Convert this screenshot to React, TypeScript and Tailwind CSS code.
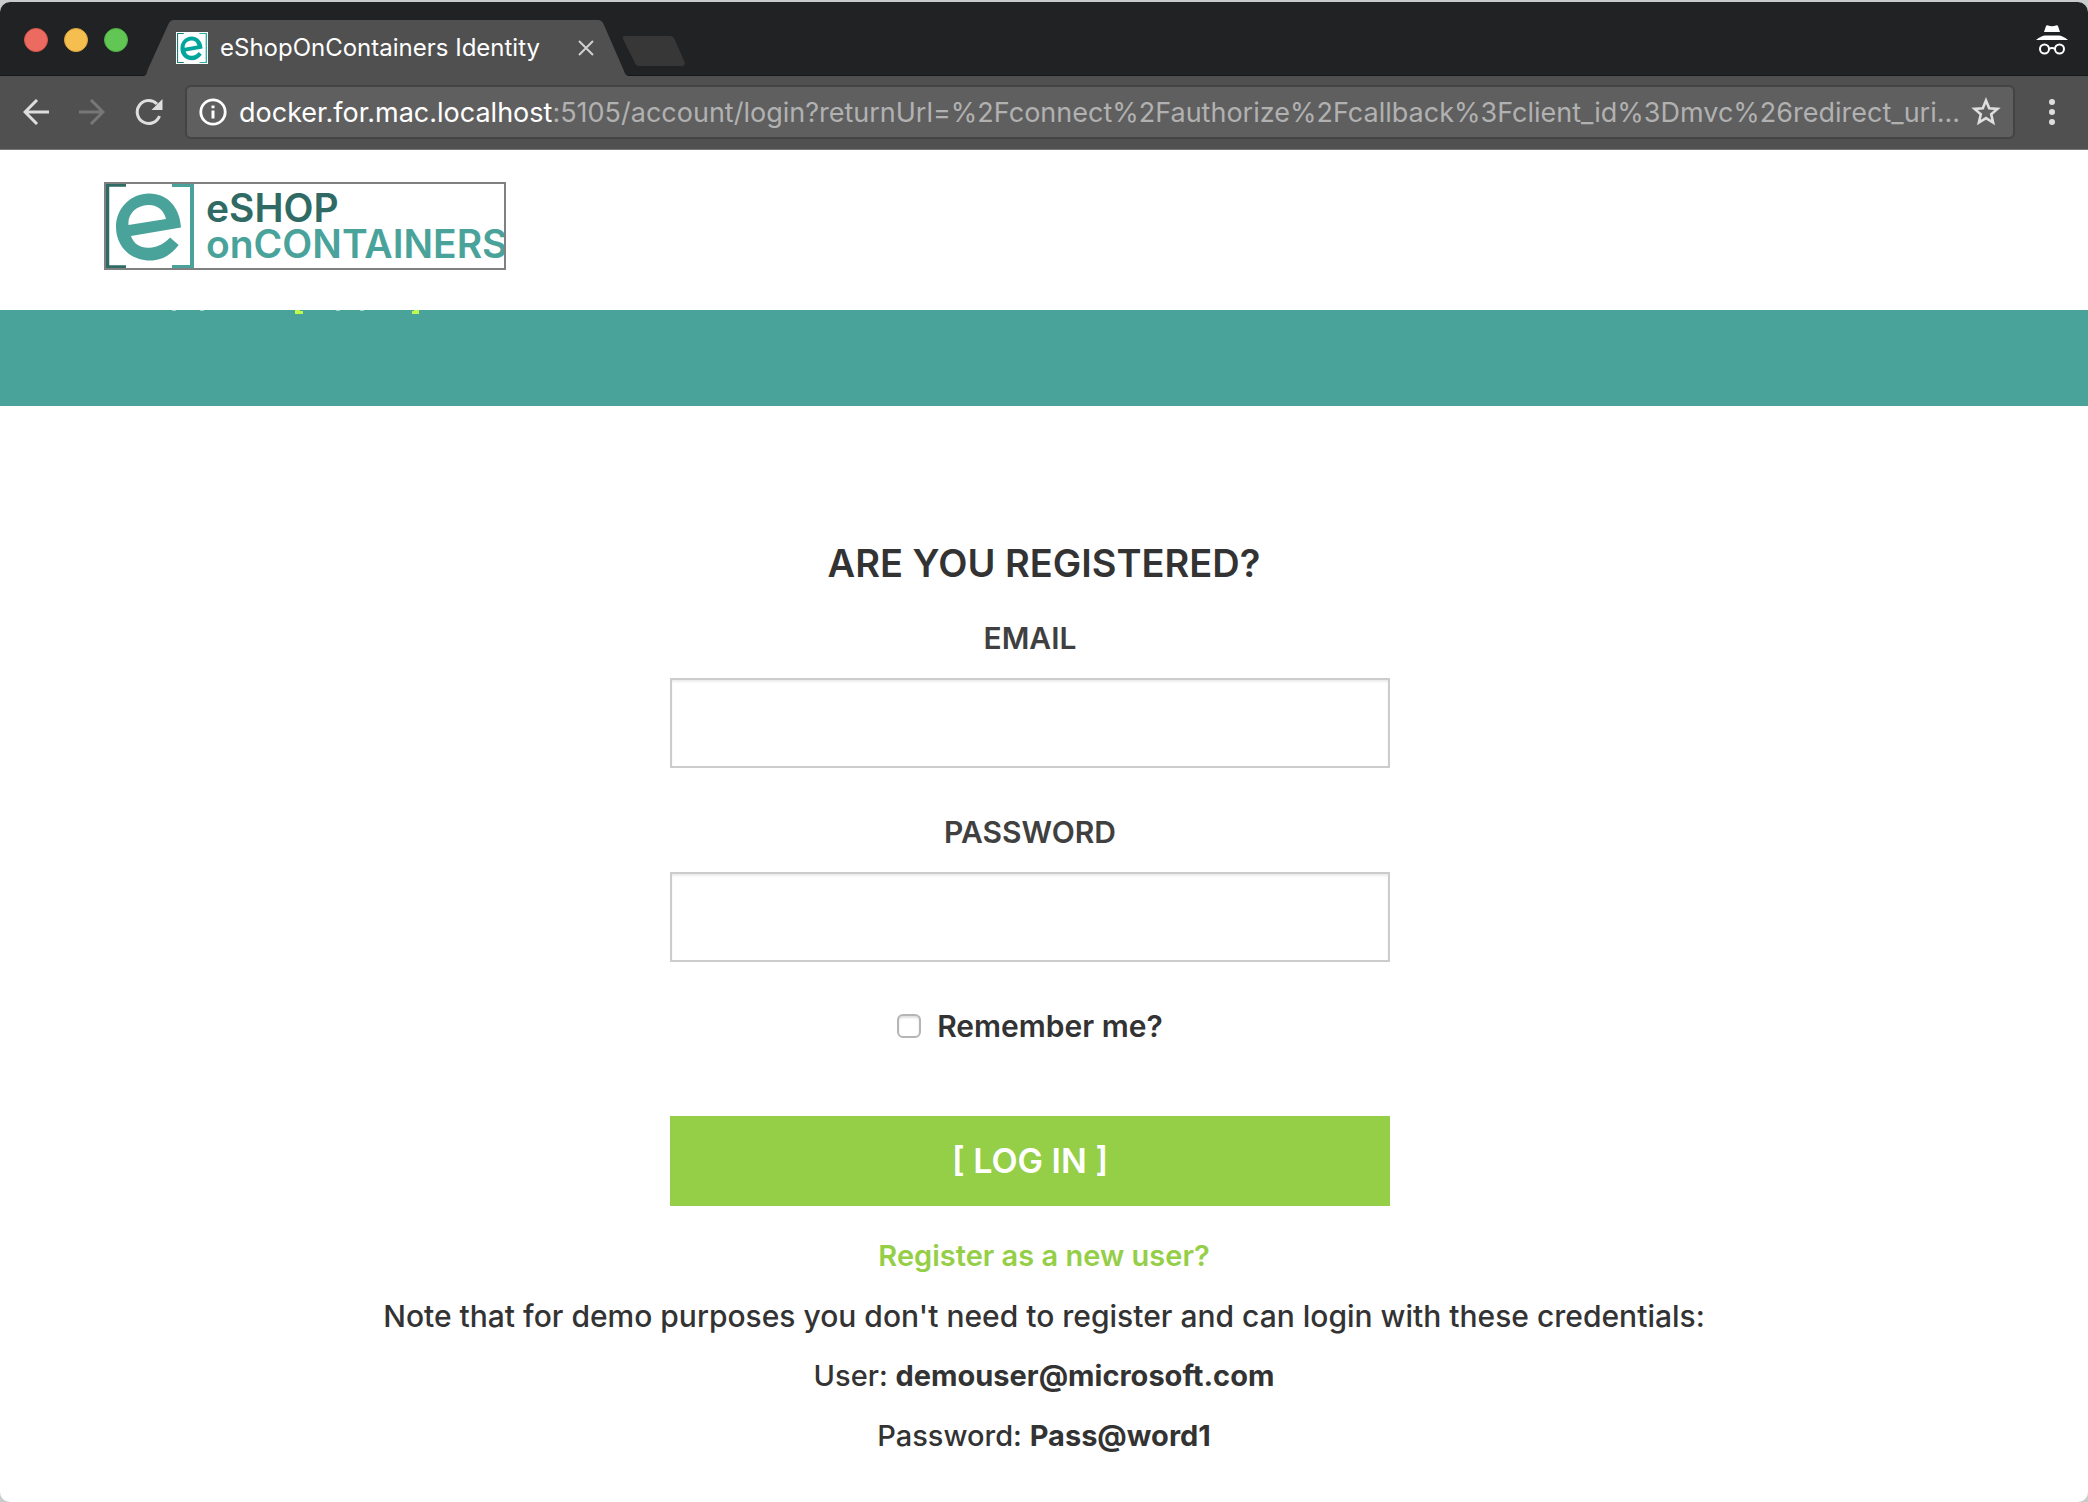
import React from "react";

const ui = "font-[Inter,sans-serif]";

function TrafficLights() {
  return (
    <div className="flex gap-4 pl-6 pt-[26px]">
      <button type="button" aria-label="Close window" className="size-6 rounded-full border border-[#d8574c] bg-[#ec6b60]" />
      <button type="button" aria-label="Minimise window" className="size-6 rounded-full border border-[#dda53c] bg-[#f5bf4f]" />
      <button type="button" aria-label="Zoom window" className="size-6 rounded-full border border-[#4fb043] bg-[#62c655]" />
    </div>
  );
}

function EMark({ light, dark, e, className }: { light: string; dark: string; e: string; className: string }) {
  return (
    <svg viewBox="0 0 88 84" className={className} aria-hidden="true" preserveAspectRatio="none">
      <path d="M20 1H1.500V83H20" fill="none" stroke={dark} strokeWidth="3.500" />
      <path d="M66 1H86V83H66" fill="none" stroke={light} strokeWidth="4" />
      <path
        fill={e}
        fillRule="evenodd"
        d="M75 43.500L25 52C28 61 36 65 46 63.500C53 62.500 59 59 64 53.500L72.700 61C65 71 56 76.500 44 76.500C24 76.500 10 62 10 43C10 24 25 9.500 43 9.500C62 9.500 74 24 75 43.500ZM22.500 41L60 35C58 26 51 20.500 42 21C30 21.500 21.500 30 22.500 41Z"
      />
    </svg>
  );
}

function TabStrip() {
  return (
    <div className="relative flex h-[74px] items-start rounded-t-[10px] border-b border-[#17181a] bg-[#202224]">
      <TrafficLights />
      <div className="relative -mb-px ml-4 mt-[18px] h-14 w-[484px]">
        <svg viewBox="0 0 484 56" className="absolute inset-0 h-full w-full" aria-hidden="true">
          <path d="M0 56C3 55 3 52 4 49L24 5Q26 0 30 0H454Q458 0 460 5L480 51Q481 55 484 56Z" fill="#505050" />
        </svg>
        <div className={`relative flex h-full items-center pl-8 text-white ${ui}`}>
          <span className="flex size-8 items-center justify-center bg-white">
            <EMark light="#2fb0a4" dark="#1d7d74" e="#00a69c" className="h-[30px] w-[30px]" />
          </span>
          <span className="ml-3 w-[358px] whitespace-nowrap text-2xl">eShopOnContainers Identity</span>
          <button type="button" aria-label="Close tab">
            <svg viewBox="0 0 16 16" className="size-4" aria-hidden="true">
              <path d="M1 1L15 15M15 1L1 15" stroke="#d0d0d0" strokeWidth="2" />
            </svg>
          </button>
        </div>
      </div>
      <button type="button" aria-label="New tab" className="-ml-1.5 mt-[34px]">
        <svg viewBox="0 0 64 30" className="h-[30px] w-16" aria-hidden="true">
          <path d="M3 0H48Q51 0 52 2L63 27Q63 30 60 30H17Q14 30 13 27L1 3Q0 0 3 0Z" fill="#373737" />
        </svg>
      </button>
      <svg viewBox="0 0 32 30" className="ml-auto mr-5 mt-[23px] h-[30px] w-8" aria-label="Incognito">
        <path d="M8 7L10 1Q10.500 0 12 .5Q16 2 20 .5Q21.500 0 22 1L24 7Z" fill="#fff" />
        <path d="M0 15Q6 10 10 10.500H22Q26 10 32 15Z" fill="#fff" />
        <g fill="none" stroke="#fff" strokeWidth="2">
          <circle cx="8.500" cy="24" r="4.500" />
          <circle cx="23.500" cy="24" r="4.500" />
          <path d="M13 24Q16 22 19 24" />
        </g>
      </svg>
    </div>
  );
}

function Toolbar() {
  return (
    <div className={`flex h-[74px] items-center border-b border-[#777] bg-[#505050] pb-0.5 ${ui}`}>
      <button type="button" aria-label="Back" className="ml-[23px]">
        <svg viewBox="0 0 26 26" className="size-[26px]" aria-hidden="true">
          <path d="M26 13H2M14 1L2 13L14 25" fill="none" stroke="#dedede" strokeWidth="3" />
        </svg>
      </button>
      <button type="button" aria-label="Forward" className="ml-[30px]">
        <svg viewBox="0 0 26 26" className="size-[26px]" aria-hidden="true">
          <path d="M0 13H24M12 1L24 13L12 25" fill="none" stroke="#777" strokeWidth="3" />
        </svg>
      </button>
      <button type="button" aria-label="Reload" className="ml-[30px]">
        <svg viewBox="0 0 28 28" className="size-7" aria-hidden="true">
          <path d="M24.500 18A11.500 11.500 0 1 1 22 6" fill="none" stroke="#dedede" strokeWidth="3" />
          <path d="M27.500 1V12H16.500Z" fill="#dedede" />
        </svg>
      </button>
      <div className="ml-[22px] flex h-[54px] min-w-0 flex-1 items-center rounded-md border-2 border-[#434343] bg-[#5f5f5f] pl-3 pr-3">
        <svg viewBox="0 0 28 28" className="size-7 shrink-0" aria-hidden="true">
          <circle cx="14" cy="14" r="12.200" fill="none" stroke="#fff" strokeWidth="2.800" />
          <path d="M12.500 7.500H15.500V10.300H12.500ZM12.500 12.500H15.500V20.500H12.500Z" fill="#fff" />
        </svg>
        <div className="ml-3 min-w-0 flex-1 whitespace-nowrap pt-1 text-[27px] text-[#b1b1b1]">
          <span className="text-white">docker.for.mac.localhost</span>
          :5105/account/login?returnUrl=%2Fconnect%2Fauthorize%2Fcallback%3Fclient_id%3Dmvc%26redirect_uri...
        </div>
        <button type="button" aria-label="Bookmark this page" className="shrink-0">
          <svg viewBox="0 0 30 30" className="size-[30px]" aria-hidden="true">
            <path d="M15 3.500L18.200 11.200L26.500 11.900L20.200 17.300L22.100 25.500L15 21.100L7.900 25.500L9.800 17.300L3.500 11.900L11.800 11.200Z" fill="none" stroke="#dedede" strokeWidth="2.600" />
          </svg>
        </button>
      </div>
      <button type="button" aria-label="Menu" className="ml-[34px] mr-[33px] flex flex-col gap-1">
        <span className="size-1.5 rounded-full bg-[#dedede]" />
        <span className="size-1.5 rounded-full bg-[#dedede]" />
        <span className="size-1.5 rounded-full bg-[#dedede]" />
      </button>
    </div>
  );
}

function Logo() {
  return (
    <a href="#" className="flex h-[88px] w-[402px] overflow-hidden border-2 border-[#808080] bg-white">
      <EMark light="#49a39a" dark="#2f6b64" e="#49a39a" className="h-[84px] w-[88px] shrink-0" />
      <span className="ml-3 flex flex-col pt-1.5 text-[39px] leading-9 font-semibold">
        <span className="text-[#2f6b64]">eSHOP</span>
        <span className="text-[#49a39a]">onCONTAINERS</span>
      </span>
    </a>
  );
}

function Field({ id, type, label }: { id: string; type: string; label: string }) {
  return (
    <div className="flex flex-col">
      <label htmlFor={id} className="mb-5 text-center text-[30px] font-semibold text-[#404040]">{label}</label>
      <input id={id} type={type} className="h-[90px] w-full border-2 border-[#ccc] bg-white px-6 shadow-[inset_0_2px_2px_rgba(0,0,0,0.075)] outline-none" />
    </div>
  );
}

export default function App() {
  return (
    <div className="min-h-screen bg-[#c9cccd] pt-0.5">
      <div className="flex min-h-[1500px] flex-col rounded-[10px] bg-white">
        <TabStrip />
        <Toolbar />
        <div className="flex-1 rounded-b-[10px] font-[Inter,sans-serif] text-[29px] leading-10 text-[#333]">
          <header className="h-40 px-[104px] pt-8">
            <Logo />
          </header>
          <div className="h-24 bg-[#49a39a]">
            <svg viewBox="0 0 290 4" className="ml-[150px] h-1 w-[290px]" aria-hidden="true">
              <path d="M145 0H150V1H153V4H145ZM269 0H264V1H262V4H269Z" fill="#c0f94b" />
              <path d="M22 0H26V1H22ZM50 0H54V1H50ZM186 0H190V1H186ZM210 0H214V1H210Z" fill="#a4d1cc" />
            </svg>
          </div>
          <main className="pt-[135px] text-center font-medium">
            <h1 className="mb-[33px] text-[38px] leading-[44px] font-semibold">ARE YOU REGISTERED?</h1>
            <form className="pr-7" onSubmit={(e) => e.preventDefault()}>
              <div className="mx-auto flex w-full max-w-[720px] flex-col">
                <Field id="email" type="email" label="EMAIL" />
                <div className="h-11" />
                <Field id="password" type="password" label="PASSWORD" />
                <label className="mt-11 flex items-center justify-center gap-4 text-[30px] font-semibold">
                  <input type="checkbox" className="size-6 appearance-none rounded-md border-2 border-[#b5b5b5] bg-white shadow-[inset_0_2px_2px_rgba(0,0,0,0.12)]" />
                  Remember me?
                </label>
                <button type="submit" className="mt-[70px] h-[90px] bg-[#95ce47] text-[34px] font-semibold text-white">[ LOG IN ]</button>
              </div>
            </form>
            <div className="flex flex-col gap-5 pt-[30px]">
              <p><a href="#" className="font-semibold text-[#95ce47]">Register as a new user?</a></p>
              <p className="text-[30px]">Note that for demo purposes you don't need to register and can login with these credentials:</p>
              <p>User: <b className="font-bold">demouser@microsoft.com</b></p>
              <p>Password: <b className="font-bold">Pass@word1</b></p>
            </div>
          </main>
        </div>
      </div>
    </div>
  );
}
